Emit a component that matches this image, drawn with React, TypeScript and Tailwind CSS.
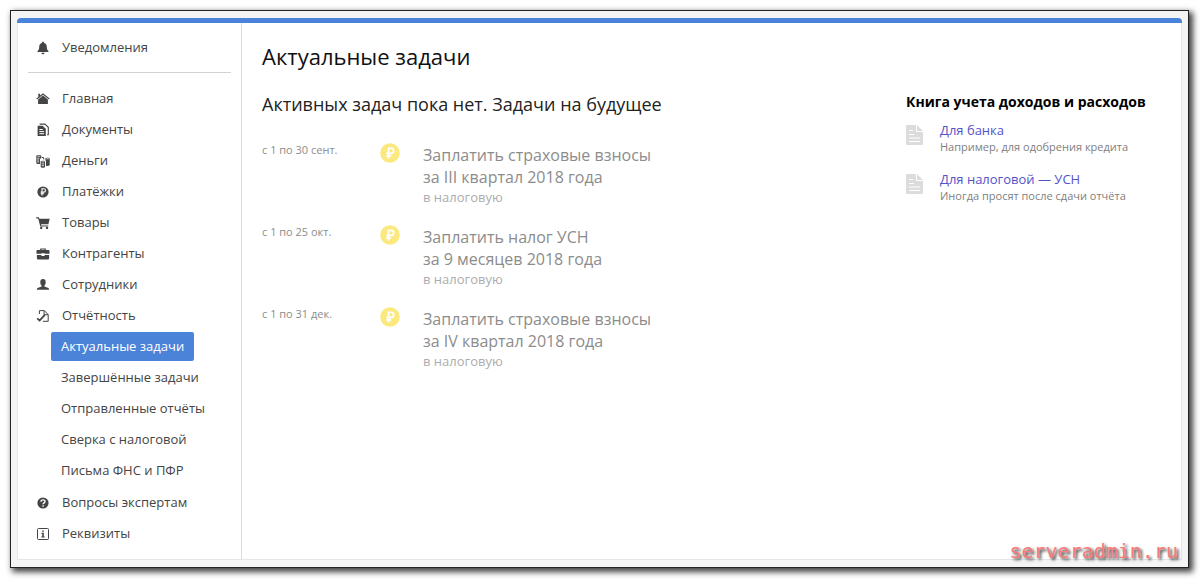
import type { ReactNode } from "react";
import { clsx } from "clsx";

interface NavItem {
  label: string;
  icon?: ReactNode;
  active?: boolean;
}

interface Task {
  dates: string;
  title: string;
  period: string;
  target: string;
}

interface BookLink {
  title: string;
  note: string;
}

function Glyph({ children }: { children: ReactNode }) {
  return (
    <svg viewBox="0 0 14 14" className="h-3.5 w-3.5 shrink-0" fill="currentColor" aria-hidden="true">
      {children}
    </svg>
  );
}

const bellIcon = (
  <Glyph>
    <path d="M7 .8c.7 0 1.100.5 1.100 1.100 1.900.5 2.700 2 2.700 3.900 0 2.500.5 3.300 1.700 4.400v.9H1.500v-.9c1.200-1.100 1.700-1.900 1.700-4.400 0-1.900.8-3.400 2.700-3.900C5.900 1.300 6.300.8 7 .8zM5.400 11.700h3.200c0 .9-.7 1.500-1.600 1.500s-1.600-.6-1.600-1.500z" />
  </Glyph>
);

const homeIcon = (
  <Glyph>
    <path d="M7 1.200 13.600 6.600 12.900 7.400 7 2.700 1.100 7.400.4 6.600 2.300 5V1.800h1.700v1.800z" />
    <path d="M7 3.600 11.900 7.500V12H2.100V7.500z" />
  </Glyph>
);

const documentsIcon = (
  <Glyph>
    <path d="M1.600 2.800h5l3.200 3V13H1.600z" />
    <path d="M3.400 6.500h3.300M3.400 8.600h4.700M3.400 10.700h4.700" stroke="#fff" strokeWidth="1" />
    <path d="M3.600 1.100h5.300l3.400 3.200v7.500h-1.200" fill="none" stroke="currentColor" strokeWidth="1.100" />
  </Glyph>
);

const moneyIcon = (
  <Glyph>
    <path d="M.3 2C.3.8 5.300.8 5.300 2v2.500H4V10H2.500C1 10 .3 9.600.3 9z" />
    <path d="M4.700 7.600c0-1.200 4.300-1.200 4.300 0V13c0 1-4.300 1-4.300 0z" />
    <path d="M9.400 4.600c0-1.200 4.300-1.200 4.300 0v6.500c0 .7-1.700 1-3.700.8V6.800l-.6-.4z" />
    <path
      d="M1.300 2.200h3M1.100 4.200h2.300M1.100 6h2M1.100 7.900h2M5.600 7.900h2.500M5.700 9.900H8M5.700 11.700H8M10.300 4.800h2.500"
      stroke="#fff"
      strokeWidth=".8"
    />
    <path d="M5.800 3.500h1.900v1.900" fill="none" stroke="currentColor" />
  </Glyph>
);

const paymentsIcon = (
  <Glyph>
    <circle cx="7" cy="7" r="5.600" />
    <path
      d="M6 10.500V3.800h1.700c2.400 0 2.400 3.300 0 3.300H4.700M4.700 8.800h3.400"
      fill="none"
      stroke="#fff"
      strokeWidth="1.100"
    />
  </Glyph>
);

const cartIcon = (
  <Glyph>
    <path d="M.2 1.300h2.700l.5 1.500h10.300l-1.300 5.500H5l.3 1.200h7v1H4.300L2.200 2.500h-2z" />
    <circle cx="5.200" cy="11.900" r="1.200" />
    <circle cx="11" cy="11.900" r="1.200" />
  </Glyph>
);

const briefcaseIcon = (
  <Glyph>
    <path d="M4.200 3V1.600h5.600V3h2.700c.7 0 1 .3 1 1v2.800H8.600V6.200H5.400v.6H.5V4c0-.7.300-1 1-1zm1.200 0h3.200v-.500H5.400z" />
    <path d="M.9 8h4.500v.9h3.200V8h4.500v3.600c0 .5-.3.800-.8.800H1.700c-.5 0-.8-.3-.8-.8z" />
  </Glyph>
);

const personIcon = (
  <Glyph>
    <path d="M7 1c1.800 0 2.700 1.200 2.700 2.900 0 1.600-.5 2.900-1.300 3.600v1.100l4 1.500c.4.200.6.700.6 1.700H1c0-1 .2-1.500.6-1.700l4-1.500V7.500C4.800 6.800 4.300 5.500 4.300 3.900 4.300 2.200 5.200 1 7 1z" />
  </Glyph>
);

const reportIcon = (
  <Glyph>
    <path
      d="M3.400 5V1.600h4.900l3.900 4v6.700H6.800M8.100 1.800v3.900h3.900"
      fill="none"
      stroke="currentColor"
      strokeWidth="1"
    />
    <path d="M1.200 9.300 3.600 11.500 8.800 5.800" fill="none" stroke="currentColor" strokeWidth="1.800" />
  </Glyph>
);

const questionIcon = (
  <Glyph>
    <circle cx="7" cy="7" r="5.600" />
    <path
      d="M5 5.700c0-2.400 4-2.400 4-.1C9 7 7.100 6.900 7.100 8.300M7.100 9.300v1.400"
      fill="none"
      stroke="#fff"
      strokeWidth="1.400"
    />
  </Glyph>
);

const infoIcon = (
  <Glyph>
    <rect x="1.500" y="1.500" width="11" height="11" rx="1" fill="none" stroke="currentColor" strokeWidth="1" />
    <path d="M6.200 3.500h1.600v1.300H6.200zM5.400 5.800h2.400v3.600h.9v1H5.300v-1h.9V6.700h-.8z" />
  </Glyph>
);

const mainItems: NavItem[] = [
  { label: "Главная", icon: homeIcon },
  { label: "Документы", icon: documentsIcon },
  { label: "Деньги", icon: moneyIcon },
  { label: "Платёжки", icon: paymentsIcon },
  { label: "Товары", icon: cartIcon },
  { label: "Контрагенты", icon: briefcaseIcon },
  { label: "Сотрудники", icon: personIcon },
  { label: "Отчётность", icon: reportIcon },
];

const reportItems: NavItem[] = [
  { label: "Актуальные задачи", active: true },
  { label: "Завершённые задачи" },
  { label: "Отправленные отчёты" },
  { label: "Сверка с налоговой" },
  { label: "Письма ФНС и ПФР" },
];

const footerItems: NavItem[] = [
  { label: "Вопросы экспертам", icon: questionIcon },
  { label: "Реквизиты", icon: infoIcon },
];

const tasks: Task[] = [
  {
    dates: "с 1 по 30 сент.",
    title: "Заплатить страховые взносы",
    period: "за III квартал 2018 года",
    target: "в налоговую",
  },
  {
    dates: "с 1 по 25 окт.",
    title: "Заплатить налог УСН",
    period: "за 9 месяцев 2018 года",
    target: "в налоговую",
  },
  {
    dates: "с 1 по 31 дек.",
    title: "Заплатить страховые взносы",
    period: "за IV квартал 2018 года",
    target: "в налоговую",
  },
];

const bookLinks: BookLink[] = [
  { title: "Для банка", note: "Например, для одобрения кредита" },
  { title: "Для налоговой — УСН", note: "Иногда просят после сдачи отчёта" },
];

function NavLink({ label, icon }: NavItem) {
  return (
    <a href="#" className="flex h-[31px] items-center gap-3 pl-[18px]">
      {icon}
      <span>{label}</span>
    </a>
  );
}

function SubNavLink({ label, active }: NavItem) {
  return (
    <div className="flex h-[31px] items-center pl-[33px]">
      <a
        href="#"
        aria-current={active ? "page" : undefined}
        className={clsx("rounded-xs px-2.5 py-1 leading-[21px]", active && "bg-[#4b83d9] text-white")}
      >
        {label}
      </a>
    </div>
  );
}

function Sidebar() {
  return (
    <nav className="w-56 shrink-0 border-r border-[#dcdcdc] pt-[9px] pb-[10px] text-[13px] text-[#444]">
      <NavLink label="Уведомления" icon={bellIcon} />
      <hr className="mx-2.5 mt-[9px] mb-[10px] border-[#d2d2d2]" />
      {mainItems.map((item) => (
        <NavLink key={item.label} {...item} />
      ))}
      <div className="pb-px">
        {reportItems.map((item) => (
          <SubNavLink key={item.label} {...item} />
        ))}
      </div>
      {footerItems.map((item) => (
        <NavLink key={item.label} {...item} />
      ))}
    </nav>
  );
}

function RoubleBadge() {
  return (
    <svg viewBox="0 0 20 20" className="h-5 w-5" aria-hidden="true">
      <circle cx="10" cy="10" r="9.800" fill="#fbe97f" />
      <path
        d="M8.500 15.500V5.300h2.700c3.400 0 3.400 5 0 5H6.300M6.300 12.800h5"
        fill="none"
        stroke="#fff"
        strokeWidth="1.700"
      />
    </svg>
  );
}

function TaskRow({ dates, title, period, target }: Task) {
  return (
    <li className="flex h-[82px] items-start">
      <span className="w-[118px] shrink-0 text-[11px] leading-[14px] text-[#8c8c8c]">{dates}</span>
      <RoubleBadge />
      <div className="pt-px pl-[23px]">
        <p className="text-base leading-[22px] text-[#8c8c8c]">
          {title}
          <br />
          {period}
        </p>
        <p className="text-[13px] leading-[18px] text-[#adadad]">{target}</p>
      </div>
    </li>
  );
}

function PageIcon() {
  return (
    <svg viewBox="0 0 17 20" className="mt-1 h-5 w-[17px] shrink-0" aria-hidden="true">
      <path d="M1 0h9v7h7v12c0 .6-.4 1-1 1H1c-.6 0-1-.4-1-1V1c0-.6.4-1 1-1z" fill="#dcdcdc" />
      <path d="M11 0 17 6H11z" fill="#dcdcdc" />
      <path d="M3 5.500h4M3 9.500h5M3 13h11M3 16.500h11" stroke="#fff" />
    </svg>
  );
}

function BookPanel() {
  return (
    <aside className="w-[275px] shrink-0 pt-[69px]">
      <h3 className="mb-0.5 text-sm leading-5 font-bold text-black">Книга учета доходов и расходов</h3>
      <ul>
        {bookLinks.map(({ title, note }) => (
          <li key={title} className="flex h-[49px] gap-[17px] pt-[7px]">
            <PageIcon />
            <div>
              <a href="#" className="block text-[13px] leading-[18px] text-[#5452cb]">
                {title}
              </a>
              <p className="text-[11px] leading-4 text-[#808080]">{note}</p>
            </div>
          </li>
        ))}
      </ul>
    </aside>
  );
}

export default function App() {
  return (
    <div className="bg-white pt-[10px] pr-[11px] pb-[11px] pl-[10px] font-['Open_Sans','Noto_Sans',sans-serif]">
      <div className="relative border border-[#222] bg-[#f4f4f4] px-1.5 py-[7px] shadow-[3px_3px_6px_1px_rgba(0,0,0,0.75)]">
        <div className="rounded-t-sm bg-[#4b83d9] pt-[5px]">
          <div className="flex border-x border-b border-[#e6e6e6] bg-white">
            <Sidebar />
            <main className="min-w-0 flex-1 pl-5">
              <h1 className="pt-[17px] text-[22px] leading-8 text-[#111]">Актуальные задачи</h1>
              <h2 className="mt-[19px] text-lg leading-[26px] text-[#222]">
                Активных задач пока нет. Задачи на будущее
              </h2>
              <ul className="mt-[26px]">
                {tasks.map((task) => (
                  <TaskRow key={task.dates} {...task} />
                ))}
              </ul>
            </main>
            <BookPanel />
          </div>
        </div>
        <span className="absolute right-[10px] bottom-1 font-['DejaVu_Sans_Mono',monospace] text-xl leading-6 text-[#f77b7b] [text-shadow:2px_2px_3px_#333]">
          serveradmin.ru
        </span>
      </div>
    </div>
  );
}
